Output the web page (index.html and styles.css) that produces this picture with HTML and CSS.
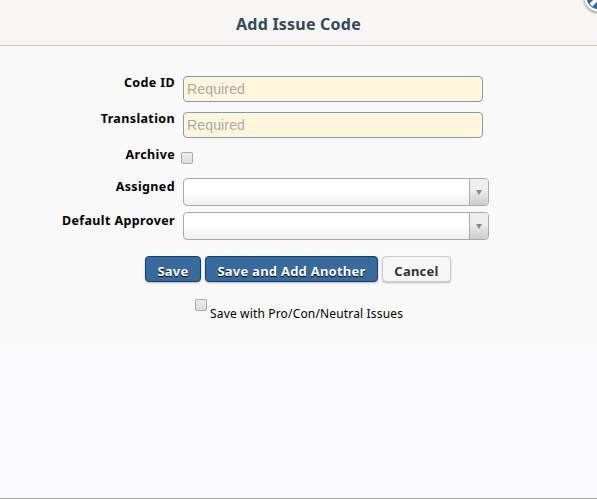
FILE: index.html
```
<!DOCTYPE html>
<html lang="en">
<head>
    <meta charset="UTF-8">
    <title>Add Issue Code</title>
    <link rel="stylesheet" href="styles.css">
</head>
<body>
    <div class="dialog">
        <div class="header">
            <h1>Add Issue Code</h1>
            <a href="#" class="close" aria-label="Close">
                <svg width="30" height="30" viewBox="0 0 30 30">
                    <circle cx="15" cy="15" r="12.5" fill="#336699"/>
                    <path d="M8 8l14 14M22 8L7 23" stroke="#fff" stroke-width="4"/>
                </svg>
            </a>
        </div>

        <form class="content">
            <div class="row">
                <label for="codeId">Code ID</label>
                <input type="text" id="codeId" placeholder="Required">
            </div>
            <div class="row">
                <label for="translation">Translation</label>
                <input type="text" id="translation" placeholder="Required">
            </div>
            <div class="row row-check">
                <label for="archive">Archive</label>
                <input type="checkbox" id="archive">
            </div>
            <div class="row row-select">
                <label>Assigned</label>
                <div class="select"><span class="arrow"></span></div>
            </div>
            <div class="row row-select">
                <label>Default Approver</label>
                <div class="select"><span class="arrow"></span></div>
            </div>

            <div class="buttons">
                <button type="button" class="btn btn-save">Save</button>
                <button type="button" class="btn btn-another">Save and Add Another</button>
                <button type="button" class="btn btn-cancel">Cancel</button>
            </div>

            <div class="option">
                <input type="checkbox" id="proCon">
                <label for="proCon">Save with Pro/Con/Neutral Issues</label>
            </div>
        </form>
    </div>
</body>
</html>
```
FILE: styles.css
```
* {
    box-sizing: border-box;
}

body {
    margin: 0;
    background-color: #fbfbff;
    font-family: "Noto Sans", Tahoma, sans-serif;
    font-size: 12px;
    color: #000;
}

.dialog {
    position: relative;
    height: 499px;
    border-bottom: 1px solid #aaa;
    overflow: hidden;
}

.header {
    height: 46px;
    background-color: #f7f6f2;
    border-bottom: 1px solid #cccabc;
}

h1 {
    margin: 0;
    padding-top: 12px;
    font-size: 16px;
    line-height: 24px;
    letter-spacing: 0.22px;
    text-align: center;
    color: #34495e;
}

/* close button hangs over the corner */
.close {
    position: absolute;
    top: -18px;
    right: -17px;
    width: 30px;
    height: 30px;
    background-color: #fff;
    border-radius: 50%;
    box-shadow: 0 1px 3px rgba(0, 0, 0, 0.5);
}

.close svg {
    display: block;
}

.content {
    height: 304px;
    padding-top: 30px;
    background-color: #f9f9f9;
}

.row {
    display: flex;
    height: 36px;
}

.row label {
    width: 175px;
    margin-right: 8px;
    font-size: 12.5px;
    font-weight: bold;
    line-height: 14px;
    letter-spacing: 0.38px;
    text-align: right;
    white-space: nowrap;
}

input[type="text"] {
    width: 300px;
    height: 26px;
    padding: 1px 3px;
    border: 1px solid #7f9db9;
    border-radius: 4px;
    background-color: #fff6dc;
    font-family: Arial, "Liberation Sans", sans-serif;
    font-size: 14px;
    letter-spacing: 0.15px;
}

input::placeholder {
    color: #a9a9a9;
}

input[type="checkbox"] {
    appearance: none;
    flex: none;
    width: 12px;
    height: 12px;
    margin: 0;
    border: 1px solid #aaa;
    border-radius: 2px;
    background: linear-gradient(#eee, #dcdcdc);
}

.row-check {
    height: 30px;
}

.row-check label {
    margin-right: 6px;
}

.row-check input[type="checkbox"] {
    margin-top: 4px;
}

.row-select {
    height: 34px;
}

.row-select label {
    padding-top: 2px;
}

.select {
    display: flex;
    justify-content: flex-end;
    width: 306px;
    height: 28px;
    border: 1px solid #aaa;
    border-radius: 4px;
    background: linear-gradient(#fff 50%, #eee);
    overflow: hidden;
}

.arrow {
    display: flex;
    justify-content: center;
    width: 19px;
    border-left: 1px solid #aaa;
    background: linear-gradient(#eee 40%, #ccc);
}

.arrow::after {
    content: "";
    height: 0;
    margin: 11px 1px 0 0;
    border: 3px solid transparent;
    border-top: 5px solid #888;
    border-bottom: 0;
}

.buttons {
    display: flex;
    gap: 4px;
    margin: 10px 0 0 145px;
}

.btn {
    height: 26px;
    padding: 4px 0 0;
    border: 1px solid #0d4266;
    border-radius: 4px;
    background-color: #396a9d;
    box-shadow: 0 1px 2px rgba(0, 0, 0, 0.25);
    font-family: inherit;
    font-size: 13px;
    font-weight: bold;
    line-height: 18px;
    letter-spacing: 0.24px;
    white-space: nowrap;
    color: #fff;
    text-shadow: 0 1px 1px #000;
}

.btn-save {
    width: 56px;
}

.btn-another {
    width: 173px;
}

.btn-cancel {
    width: 69px;
    border-color: #ccc;
    background-color: #f7f7f7;
    color: #333;
    text-shadow: none;
}

.option {
    display: flex;
    margin: 17px 0 0 195px;
}

.option label {
    margin: 6px 0 0 3px;
    line-height: 18px;
    letter-spacing: 0.16px;
    white-space: nowrap;
}
```
